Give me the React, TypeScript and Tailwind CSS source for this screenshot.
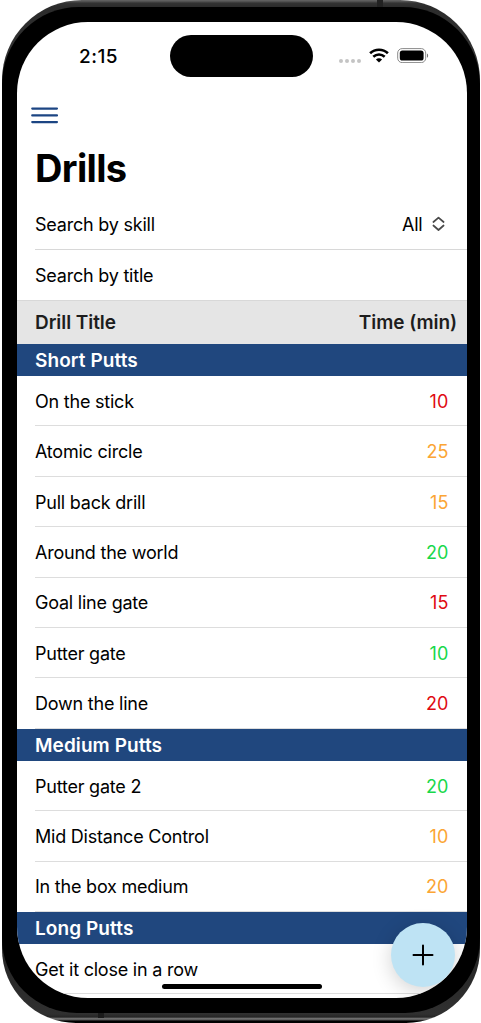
import React from 'react';

type Level = 'hard' | 'medium' | 'easy';

interface Drill {
  title: string;
  minutes: number;
  level: Level;
}

const SECTIONS: { title: string; drills: Drill[] }[] = [
  {
    title: 'Short Putts',
    drills: [
      { title: 'On the stick',     minutes: 10, level: 'hard' },
      { title: 'Atomic circle',    minutes: 25, level: 'medium' },
      { title: 'Pull back drill',  minutes: 15, level: 'medium' },
      { title: 'Around the world', minutes: 20, level: 'easy' },
      { title: 'Goal line gate',   minutes: 15, level: 'hard' },
      { title: 'Putter gate',      minutes: 10, level: 'easy' },
      { title: 'Down the line',    minutes: 20, level: 'hard' },
    ],
  },
  {
    title: 'Medium Putts',
    drills: [
      { title: 'Putter gate 2',        minutes: 20, level: 'easy' },
      { title: 'Mid Distance Control', minutes: 10, level: 'medium' },
      { title: 'In the box medium',    minutes: 20, level: 'medium' },
    ],
  },
  {
    title: 'Long Putts',
    drills: [{ title: 'Get it close in a row', minutes: 10, level: 'easy' }],
  },
];

const LEVEL_COLOR: Record<Level, string> = {
  hard:   'text-[#df0a12]',
  medium: 'text-[#fba534]',
  easy:   'text-[#19d84b]',
};

const StatusBar: React.FC = () => (
  <div className="relative h-[67px] shrink-0">
    <span className="absolute left-[62.5px] top-[22px] text-[19px] leading-[25px] font-medium tracking-[0.5px]">2:15</span>
    <div className="absolute left-[153px] top-[13px] h-[42px] w-[143.5px] rounded-full bg-black" />
    <div className="absolute left-[322px] top-[36.5px] flex gap-[2.2px]">
      {[0, 1, 2, 3].map(i => (
        <span key={i} className="size-[4px] rounded-full bg-[#c4c4c4]" />
      ))}
    </div>
    <svg className="absolute left-[352.5px] top-[25.5px]" width="20" height="15" viewBox="0 0 20 15" fill="none" stroke="#000" strokeWidth="2.6">
      <path d="M1.1 5.3C6.1.5 13.9.5 18.9 5.3" />
      <path d="M4.3 8.8C7.6 5.8 12.4 5.8 15.7 8.8" />
      <path d="M10 14.6L6.9 11.5C8.6 9.9 11.4 9.9 13.1 11.5Z" fill="#000" stroke="none" />
    </svg>
    <svg className="absolute left-[380.5px] top-[25.5px]" width="32" height="15" viewBox="0 0 32 15" fill="none">
      <rect x=".7" y=".6" width="28" height="14" rx="4.4" stroke="#8b8b8b" />
      <rect x="2.8" y="2.6" width="23.8" height="10" rx="2.6" fill="#000" />
      <path d="M30 5.4c1.5.6 1.5 3.8 0 4.4z" fill="#777" />
    </svg>
  </div>
);

const DrillRow: React.FC<{ drill: Drill }> = ({ drill }) => (
  <div className="ml-[18.5px] flex h-[50.4px] items-center justify-between border-b border-[#dddddd] pt-[2.2px] pr-[18.5px]">
    <span>{drill.title}</span>
    <span className={`tracking-[0.1px] ${LEVEL_COLOR[drill.level]}`}>{drill.minutes}</span>
  </div>
);

export default function App() {
  return (
    <div className="h-[1023px] w-[481px] overflow-hidden bg-white pl-[1.5px]">
      <div className="relative h-[1023px] w-[478.5px] overflow-hidden rounded-t-[80px] rounded-b-[74px] bg-[linear-gradient(to_bottom,#666_0px,#4a4a4a_2px,#333_3px,#2b2b2b_7px,#3a3a3a_100px,#1c1c1c_900px,#303030_1014px,#262626_1017px,#858585_1019px,#3a3a3a_1020px,#000_1021.5px)]">
        {/* antenna bands */}
        <div className="absolute top-0 left-[375px] h-[7px] w-[6px] bg-[#222]" />
        <div className="absolute top-[1013px] left-[96px] h-[5px] w-[6px] bg-[#1b1b1b]" />

        <div className="mt-[7px] h-[1006px] rounded-t-[77px] rounded-b-[75px] bg-black pt-[15px] pl-[15px]">
          <div className="relative flex h-[976px] w-[450.5px] flex-col overflow-hidden rounded-[71px] bg-white font-['Inter','Liberation_Sans',sans-serif] text-[18px] leading-[24px] tracking-[-0.22px] text-black">
            <StatusBar />

            <div className="h-[54px] shrink-0 pt-[18px] pl-[14.5px]">
              <svg width="28" height="18" viewBox="0 0 28 18" stroke="#1c4583" strokeWidth="2.1" strokeLinecap="round">
                <path d="M1.2 1.6H26M1.2 8.4H26M1.2 15.1H26" />
              </svg>
            </div>
            <h1 className="h-[56px] shrink-0 pl-[18.5px] text-[38px] leading-[50px] font-bold tracking-[-0.65px]">Drills</h1>

            <div className="ml-[18.5px] flex h-[51px] shrink-0 items-center justify-between border-b border-[#d8d8d8] pt-[2px] pr-[22.5px]">
              <span>Search by skill</span>
              <span className="flex items-center gap-[9px]">
                All
                <svg className="-mt-[3px]" width="13" height="16" viewBox="0 0 13 16" fill="none" stroke="#4a4a4a" strokeWidth="1.7" strokeLinecap="round" strokeLinejoin="round">
                  <path d="M1.4 6L6.5 1.6L11.6 6M1.4 9.5L6.5 14L11.6 9.5" />
                </svg>
              </span>
            </div>
            <div className="ml-[18.5px] flex h-[50px] shrink-0 items-center pt-[2px]">Search by title</div>

            <div className="flex h-[44px] shrink-0 items-center justify-between border-t border-[#d8d8d8] bg-[#e5e5e5] pr-[10px] pl-[18.5px] text-[19px] font-semibold tracking-[-0.06px] text-[#1d1d1d]">
              <span>Drill Title</span>
              <span>Time (min)</span>
            </div>

            {SECTIONS.map(section => (
              <section key={section.title} className="shrink-0">
                <h2 className="h-[32px] bg-[#20477e] pt-[1px] pl-[18.5px] text-[19px] leading-[32px] font-semibold tracking-[0.08px] text-white">{section.title}</h2>
                {section.drills.map(drill => (
                  <DrillRow key={drill.title} drill={drill} />
                ))}
              </section>
            ))}

            <button className="absolute top-[901px] left-[374.5px] flex size-[64px] items-center justify-center rounded-full bg-[#bee3f4] shadow-[0_4px_20px_rgba(0,0,0,0.18)]">
              <svg width="22" height="22" viewBox="0 0 22 22" stroke="#000" strokeWidth="2" strokeLinecap="round">
                <path d="M11 1.5V20.5M1.5 11H20.5" />
              </svg>
            </button>
            <div className="absolute top-[961.5px] left-[145px] h-[5.5px] w-[160px] rounded-full bg-black" />
          </div>
        </div>
      </div>
    </div>
  );
}
